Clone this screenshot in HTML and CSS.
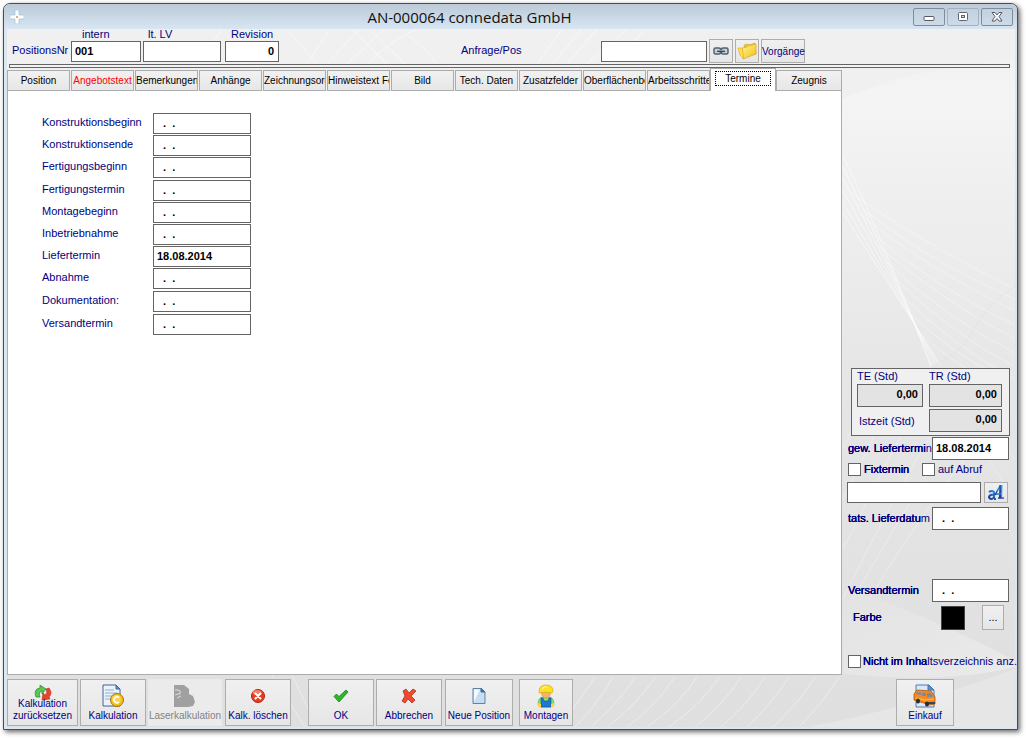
FILE: index.html
```html
<!DOCTYPE html>
<html lang="de">
<head>
<meta charset="utf-8">
<meta name="viewport" content="width=device-width, initial-scale=1">
<title>AN-000064 connedata GmbH</title>
<link rel="stylesheet" href="styles.css">
</head>
<body>
<div class="window">
  <header class="titlebar">
    <svg class="app-icon" width="14" height="14" viewBox="0 0 14 14" aria-hidden="true"><path d="M5 0h4v5h5v4H9v5H5V9H0V5h5z" fill="#fbfdff" stroke="#9fc3da" stroke-width=".7"/><circle cx="7" cy="7" r="1" fill="#e58a6a"/></svg>
    <h1 class="title">AN-000064 connedata GmbH</h1>
    <div class="window-controls">
      <button type="button" class="win-btn" aria-label="Minimieren"><svg width="12" height="12" viewBox="0 0 12 12"><rect x="1" y="5.500" width="10" height="4" rx="1" fill="#fff" stroke="#555a66"/></svg></button>
      <button type="button" class="win-btn win-btn-dim" aria-label="Maximieren"><svg width="12" height="12" viewBox="0 0 12 12"><rect x="1.500" y="1.500" width="9" height="8" rx="1" fill="#fff" stroke="#60656f"/><rect x="4.500" y="4.500" width="3" height="2" fill="#cdd9e5" stroke="#60656f"/></svg></button>
      <button type="button" class="win-btn" aria-label="Schließen"><svg width="12" height="12" viewBox="0 0 12 12"><path d="M1 1.500h3l2 2.500 2-2.500h3L8 5.500l3 4.500H8L6 7.500 4 10H1l3-4.500z" fill="#fff" stroke="#555a66"/></svg></button>
    </div>
  </header>

  <main class="client">
    <svg class="backdrop" viewBox="0 0 1008 698" preserveAspectRatio="none" aria-hidden="true">
      <defs>
        <linearGradient id="bg" x1="0" y1="0" x2="0" y2="1"><stop offset="0" stop-color="#f0f0f0"/><stop offset=".1" stop-color="#f4f4f4"/><stop offset=".3" stop-color="#ededed"/><stop offset=".5" stop-color="#e6e6e6"/><stop offset="1" stop-color="#dfdfdf"/></linearGradient>
        <linearGradient id="wave" x1="0" y1="0" x2="1" y2="1"><stop offset="0" stop-color="#e3e3e3"/><stop offset="1" stop-color="#efefef"/></linearGradient>
      </defs>
      <rect width="1008" height="698" fill="url(#bg)"/>
      <path d="M0 0H1008V30Q900 40 836 70H0z" fill="#f0f0f0"/>
      <path d="M836 560Q910 580 1008 632V638Q940 655 836 645z" fill="url(#wave)" opacity=".7"/>
      <path d="M800 698Q900 680 1008 640V698z" fill="#e6e6e6"/>
      <g fill="none" stroke="#fff" stroke-opacity=".5">
        <path d="M836 126Q880 220 924 338M836 138Q880 225 925 338M836 150Q880 232 927 337M836 162Q880 240 929 336M836 174Q880 248 931 335M836 184Q880 252 933 335"/>
        <path d="M840 160Q900 206 1008 260M846 172Q910 226 1008 270M854 186Q920 240 1008 282M862 202Q930 260 1008 296M870 216Q935 272 1008 310M878 232Q940 290 1008 324M886 248Q945 305 1008 338M894 266Q950 320 1008 350M902 284Q950 328 990 345M910 302Q940 328 960 340" stroke-opacity=".35"/>
        <path d="M924 338Q955 325 970 295Q985 270 1008 258" stroke="#ddd"/>
        <path d="M836 420L874 340M836 470Q870 400 902 340M836 520Q880 430 930 340M836 570Q890 460 940 380M846 570Q910 460 960 380M862 570Q910 490 980 400M920 340L1008 470M940 340L1008 430M900 350L1008 510" stroke-opacity=".3"/>
        <path d="M300 35L322 2M320 35L352 0M340 35L378 0M360 35Q385 10 410 0M345 0L380 35M362 0L398 35M400 6Q420 20 430 35M530 35L555 0M545 35L575 0M560 35L590 0M580 35L620 0M600 35L640 0M240 35L262 0M218 35L240 0M190 35L215 0M280 0L310 35" stroke-opacity=".5"/>
        <path d="M285 646L310 698M265 646L298 698M566 680L588 648M568 698Q590 676 606 648M584 698Q610 676 628 648M600 698Q630 676 648 648M620 698Q650 676 668 648M640 698Q672 676 690 648M662 698Q694 676 712 648M688 698Q716 676 734 648M714 698Q740 676 758 648M740 698Q764 676 782 648M766 698Q790 676 808 648M792 698Q814 676 832 648" stroke-opacity=".4"/>
      </g>
    </svg>

    <section class="header" aria-label="Position">
      <span class="label lead">PositionsNr</span>
      <div class="stack stack-intern"><label for="intern">intern</label><input id="intern" type="text" value="001"></div>
      <div class="stack stack-lv"><label for="lv">lt. LV</label><input id="lv" type="text"></div>
      <div class="stack stack-rev"><label for="rev">Revision</label><input id="rev" class="num" type="text" value="0"></div>
      <div class="request">
        <label class="label" for="anfrage">Anfrage/Pos</label>
        <input id="anfrage" type="text">
        <button type="button" class="tool" aria-label="Verknüpfen"><svg width="16" height="10" viewBox="0 0 16 10"><rect x="1" y="2" width="6.500" height="6" rx="1.500" fill="#c5d0d8" stroke="#50616f" stroke-width="1.500"/><rect x="8.500" y="2" width="6.500" height="6" rx="1.500" fill="#c5d0d8" stroke="#50616f" stroke-width="1.500"/><path d="M4 5h8" stroke="#33444f" stroke-width="2"/><path d="M4 4.500h8" stroke="#b9c8d2" stroke-width=".7"/></svg></button>
        <button type="button" class="tool" aria-label="Ordner"><svg width="20" height="18" viewBox="0 0 20 18"><defs><linearGradient id="fold" x1="0" y1="0" x2="1" y2="1"><stop stop-color="#fff38d"/><stop offset="1" stop-color="#f3be1c"/></linearGradient></defs><path d="M7 3l4-1 1 1 6-2 1 11-10 2z" fill="#f0c63c" stroke="#cfa023" stroke-width=".6"/><path d="M5 6l5-1 1-1 8-2v10L6 17z" fill="url(#fold)" stroke="#dba821" stroke-width=".7"/><path d="M1 6l4 0 2 11-4-4z" fill="#ffe04e" stroke="#dba821" stroke-width=".6"/></svg></button>
        <button type="button" class="tool tool-text">Vorgänge</button>
      </div>
    </section>
    <div class="rule"></div>

    <div class="body">
      <section class="left">
        <nav class="tabs" role="tablist">
          <button type="button" role="tab" class="tab"><span>Position</span></button>
          <button type="button" role="tab" class="tab tab-red"><span>Angebotstext</span></button>
          <button type="button" role="tab" class="tab"><span>Bemerkungen</span></button>
          <button type="button" role="tab" class="tab"><span>Anhänge</span></button>
          <button type="button" role="tab" class="tab"><span>Zeichnungsord</span></button>
          <button type="button" role="tab" class="tab"><span>Hinweistext Fe</span></button>
          <button type="button" role="tab" class="tab"><span>Bild</span></button>
          <button type="button" role="tab" class="tab"><span>Tech. Daten</span></button>
          <button type="button" role="tab" class="tab"><span>Zusatzfelder</span></button>
          <button type="button" role="tab" class="tab"><span>Oberflächenbe</span></button>
          <button type="button" role="tab" class="tab"><span>Arbeitsschritte</span></button>
          <button type="button" role="tab" class="tab tab-active" aria-selected="true"><span>Termine</span></button>
          <button type="button" role="tab" class="tab tab-last"><span>Zeugnis</span></button>
        </nav>
        <form class="panel">
          <div class="row"><label for="d1">Konstruktionsbeginn</label><input id="d1" type="text" value="  .  ."></div>
          <div class="row"><label for="d2">Konstruktionsende</label><input id="d2" type="text" value="  .  ."></div>
          <div class="row"><label for="d3">Fertigungsbeginn</label><input id="d3" type="text" value="  .  ."></div>
          <div class="row row-spaced"><label for="d4">Fertigungstermin</label><input id="d4" type="text" value="  .  ."></div>
          <div class="row"><label for="d5">Montagebeginn</label><input id="d5" type="text" value="  .  ."></div>
          <div class="row"><label for="d6">Inbetriebnahme</label><input id="d6" type="text" value="  .  ."></div>
          <div class="row"><label for="d7">Liefertermin</label><input id="d7" type="text" value="18.08.2014"></div>
          <div class="row"><label for="d8">Abnahme</label><input id="d8" type="text" value="  .  ."></div>
          <div class="row row-spaced"><label for="d9">Dokumentation:</label><input id="d9" type="text" value="  .  ."></div>
          <div class="row row-spaced"><label for="d10">Versandtermin</label><input id="d10" type="text" value="  .  ."></div>
        </form>
        <footer class="actions">
          <button type="button" class="action action-reset"><svg width="18" height="16" viewBox="0 0 18 16"><path d="M2 12Q-1 4 6 3V0l6 4-4 5V6Q4 7 6 12z" fill="#5cc653" stroke="#268a2b" stroke-width=".7"/><path d="M12 4l3-1q4 5 0 9l1 2-8 1 1-7 2 2q3-2 1-6z" fill="#e8442c" stroke="#b62c1b" stroke-width=".6"/></svg><span>Kalkulation<br>zurücksetzen</span></button>
          <button type="button" class="action action-calc"><svg width="22" height="24" viewBox="0 0 22 24"><path d="M1 1h13l4 4v17H1z" fill="#eaf3fc" stroke="#3f6595"/><path d="M14 1v4h4z" fill="#6798cb" stroke="#3f6595"/><path d="M3 6h9M3 9h12M3 12h7M3 15h5" stroke="#93afc9"/><circle cx="15" cy="16" r="6.500" fill="#f5bd19" stroke="#a87609"/><circle cx="14.500" cy="15.500" r="4.500" fill="#fbd54a"/><path d="M17 13.500a3 3 0 1 0 0 4.500" fill="none" stroke="#fff" stroke-width="1.500"/></svg><span>Kalkulation</span></button>
          <button type="button" class="action action-laser" disabled><svg width="22" height="24" viewBox="0 0 22 24"><path d="M0 1h10l5 4v5l4 2 2 6-2 4-5 1H0z" fill="#a0a0a0"/><path d="M1 6h3l2 1v3H4l-3 1M3 14l4-2" stroke="#dedede" fill="none"/></svg><span>Laserkalkulation</span></button>
          <button type="button" class="action action-clear"><svg width="16" height="16" viewBox="0 0 16 16"><circle cx="8" cy="8" r="6.500" fill="#e93b20" stroke="#af2616"/><ellipse cx="7" cy="4.500" rx="4.500" ry="2.500" fill="#f47c62"/><path d="M5.500 5.500l5 5m0-5l-5 5" stroke="#fff" stroke-width="2" stroke-linecap="round"/></svg><span>Kalk. löschen</span></button>
          <button type="button" class="action action-ok"><svg width="16" height="16" viewBox="0 0 16 16"><path d="M1 8.500L3.500 6 6 8.500 13 2l2 2L6 14z" fill="#2fb62b" stroke="#168019" stroke-width=".8"/></svg><span>OK</span></button>
          <button type="button" class="action action-cancel"><svg width="16" height="16" viewBox="0 0 16 16"><path d="M2 3l3-2 3 4 4-4 3 2-5 5 4 4-3 3-4-4-3 4-3-2 3-5z" fill="#f04a2c" stroke="#b3301b" stroke-width=".8"/></svg><span>Abbrechen</span></button>
          <button type="button" class="action action-new"><svg width="16" height="16" viewBox="0 0 16 16"><path d="M2 .5h8.500L14 4v11.500H2z" fill="#c5def5" stroke="#5d83a8"/><path d="M3 1.500h6l-6 12z" fill="#f7fbff"/><path d="M10 .5V4h4z" fill="#3d78ad" stroke="#3d6d9a"/></svg><span>Neue Position</span></button>
          <button type="button" class="action action-fit"><svg width="18" height="24" viewBox="0 0 18 24"><path d="M1 21q0-8 5-8h6q5 0 5 8l-3 2H4z" fill="#8be06b" stroke="#4ea83a" stroke-width=".6"/><path d="M4 14h2l1 3h4l1-3h2v9H4z" fill="#1f79cc" stroke="#125298" stroke-width=".6"/><ellipse cx="9" cy="9" rx="4.500" ry="5" fill="#f6b26a" stroke="#d58b42" stroke-width=".5"/><path d="M2 8Q2 1 9 1t7 6l-1 2q-7-2-13 0z" fill="#ffe21c" stroke="#d7a90c" stroke-width=".7"/><path d="M5 5q2-3 5-2" stroke="#fff8a5" fill="none"/><path d="M1 19l3 1v3H1zM17 19l-3 1v3h3z" fill="#ffd34b"/></svg><span>Montagen</span></button>
        </footer>
      </section>

      <aside class="side">
        <div class="times">
          <label for="te">TE (Std)</label><label for="tr">TR (Std)</label>
          <input id="te" class="num ro" type="text" value="0,00" readonly><input id="tr" class="num ro" type="text" value="0,00" readonly>
          <label class="actual" for="ist">Istzeit (Std)</label><input id="ist" class="num ro" type="text" value="0,00" readonly>
        </div>
        <div class="side-row"><label for="gew"><span class="heavy">gew. Liefertermi</span>n</label><input id="gew" class="date" type="text" value="18.08.2014"></div>
        <div class="checks">
          <label class="check check-fix"><input type="checkbox"><span class="heavy">Fixtermin</span></label>
          <label class="check"><input type="checkbox"><span>auf Abruf</span></label>
        </div>
        <div class="note">
          <input type="text" aria-label="Lieferhinweis">
          <button type="button" class="font-btn" aria-label="Schriftart"><svg width="18" height="17" viewBox="0 0 18 17"><defs><linearGradient id="ink" x1="0" y1="1" x2="1" y2="0"><stop stop-color="#122f8c"/><stop offset="1" stop-color="#2f9be8"/></linearGradient></defs><g fill="none" stroke="url(#ink)"><path d="M2 8q3-2 5 0v7M7 10.500q-5 0-5 3 2 3 5 0M7 15h2" stroke-width="2"/><path d="M8 11L13 2" stroke-width="1.500"/><path d="M14 1l-.5 13" stroke-width="3"/><path d="M9 10h5M11 14h6" stroke-width="1.500"/></g></svg></button>
        </div>
        <div class="side-row"><label for="tats"><span class="heavy">tats. Lieferdatu</span>m</label><input id="tats" class="date" type="text" value="  .  ."></div>
        <div class="side-row side-row-ship"><label for="vers"><span class="heavy">Versandtermin</span></label><input id="vers" class="date" type="text" value="  .  ."></div>
        <div class="colour"><span class="heavy">Farbe</span><span class="swatch"></span><button type="button" class="more" aria-label="Farbe wählen">...</button></div>
        <label class="check check-toc"><input type="checkbox"><span><span class="heavy">Nicht im Inha</span>ltsverzeichnis anz.</span></label>
        <button type="button" class="action action-buy"><svg width="24" height="24" viewBox="0 0 24 24"><path d="M3 1h13l5 5v17H3z" fill="#d8e9fb" stroke="#5379aa"/><path d="M15 1v5h6z" fill="#5594d6" stroke="#3e75b5"/><path d="M1 10l3-4 14 1 4 6v7l-5 1L1 16z" fill="#f78b1e" stroke="#a9550b" stroke-width=".8"/><path d="M3 10l1-2 4 .5V11zM9 8.500l4 .5v3H9zM14 9h4l2 4h-6z" fill="#7d88a8"/><path d="M3 14l9 2 9-1" stroke="#ffc15c" fill="none"/><path d="M12 18h10v2H12z" fill="#45414c"/><ellipse cx="5" cy="17" rx="2" ry="2.500" fill="#292b32"/><ellipse cx="14" cy="20" rx="2" ry="2.500" fill="#292b32"/></svg><span>Einkauf</span></button>
      </aside>
    </div>
  </main>
</div>
</body>
</html>
```

FILE: styles.css
```css
* { box-sizing: border-box; }

body {
  margin: 0;
  min-height: 100vh;
  padding: 3px 8px 8px 3px;
  display: flex;
  background: #fff;
  color: #000080;
  font: 11px/13px "Liberation Sans", Arial, sans-serif;
}

button, input { font: inherit; color: inherit; margin: 0; }

input[type="text"] {
  min-width: 0;
  height: 21px;
  padding: 0 3px 1px;
  border: 1px solid #646464;
  border-radius: 0;
  background: #fff;
  color: #000;
  font-weight: bold;
}

input[type="text"].num { text-align: right; padding-right: 4px; }

/* Window frame */
.window {
  flex: 1;
  min-width: 0;
  display: flex;
  flex-direction: column;
  padding: 0 2px 2px 3px;
  border: 1px solid #4a4d52;
  border-radius: 7px 7px 0 0;
  background: #dce6f1;
  box-shadow: 2px 2px 5px rgba(0, 0, 0, .6);
}

.titlebar {
  height: 25px;
  margin: 0 -2px 0 -3px;
  padding: 4px 4px 0 6px;
  display: grid;
  grid-template-columns: 1fr auto 1fr;
  align-items: start;
  border-radius: 6px 6px 0 0;
  background: linear-gradient(#bccad8, #d8e5f2);
}

.app-icon { margin-top: 2px; }

.title {
  margin: 0 84px 0 0;
  color: #111;
  font: 15px/18px "Open Sans", "Noto Sans", sans-serif;
}

.window-controls { display: flex; justify-content: flex-end; gap: 2px; }

.win-btn {
  width: 32px;
  height: 18px;
  padding: 0;
  display: grid;
  place-items: center;
  border: 1px solid #7f8c9d;
  border-radius: 2px;
  background: linear-gradient(#c3d1df, #cddbe9);
}

.win-btn-dim { border-color: #a3b1c0; }

/* Client area */
.client {
  position: relative;
  isolation: isolate;
  flex: 1;
  display: flex;
  flex-direction: column;
}

.backdrop {
  position: absolute;
  inset: 0;
  z-index: -1;
  width: 100%;
  height: 100%;
}

.header {
  display: flex;
  align-items: flex-end;
  padding: 0 0 1px 5px;
}

.label { padding-bottom: 2px; line-height: 22px; }
.lead { width: 59px; }
.stack { display: flex; flex-direction: column; padding-bottom: 1px; }
.stack label { line-height: 10px; padding-bottom: 2px; }
.stack-intern { width: 70px; margin-right: 2px; }
.stack-intern label { padding-left: 11px; }
.stack-lv { width: 78px; margin-right: 4px; }
.stack-lv label { padding-left: 5px; }
.stack-rev { width: 54px; }
.stack-rev label { padding-left: 6px; }

.request { display: flex; align-items: center; gap: 2px; margin-left: 182px; }
.request label { width: 138px; }
.request input { width: 106px; }

.tool, .font-btn, .more, .action {
  padding: 0;
  border: 1px solid #adadad;
  border-radius: 0;
  background: linear-gradient(#f0f0f0, #e6e6e6);
}

.tool {
  width: 24px;
  height: 24px;
  display: grid;
  place-items: center;
}

.tool-text { width: 44px; font-size: 10px; }

.rule {
  height: 4px;
  margin: 0 5px 0 2px;
  border: 1px solid #646464;
  background: #f3f3f3;
}

.body { flex: 1; display: flex; }

.left { flex: 1; min-width: 0; display: flex; flex-direction: column; }

/* Tabs */
.tabs { display: flex; align-items: flex-end; gap: 1px; height: 23px; }

.tab {
  flex: 1 1 63px;
  min-width: 0;
  height: 21px;
  padding: 0;
  border: 1px solid #acacac;
  border-radius: 0;
  background: linear-gradient(#f1f1f1, #e7e7e7);
  color: #000;
  font-size: 10px;
}

.tab span {
  display: block;
  overflow: hidden;
  white-space: nowrap;
  line-height: 15px;
}

.tab-red { color: #f00; }

.tab-active {
  flex-basis: 66px;
  height: 23px;
  margin: 0 -1px;
  padding: 0 4px 4px;
  border-bottom: 0;
  background: #fff;
}

.tab-active span { border: 1px dotted #000; line-height: 13px; }
.tab-last { flex-basis: 66px; }

.panel {
  flex: 1;
  display: flex;
  flex-direction: column;
  gap: 1px;
  padding: 22px 34px;
  border: solid #acacac;
  border-width: 0 1px 1px;
  background: #fff;
}

.row { display: flex; align-items: flex-start; }
.row label { width: 111px; line-height: 19px; }
.row input { width: 98px; }
.row-spaced { margin-top: 1px; }

/* Bottom actions */
.actions { display: flex; gap: 2px; padding: 4px 0 1px; }

.action {
  height: 47px;
  display: flex;
  flex-direction: column;
  align-items: center;
  justify-content: flex-end;
  gap: 2px;
  padding-bottom: 3px;
  font-size: 10px;
  line-height: 12px;
  white-space: nowrap;
}

.action-reset { width: 71px; gap: 0; }
.action-reset svg { margin-bottom: -3px; }
.action-calc { width: 66px; }
.action-laser { width: 74px; border-color: #e9e9e9; background: #ebebeb; color: #838383; }
.action-clear { width: 66px; margin-left: 1px; gap: 6px; }
.action-ok { width: 66px; margin-left: 15px; gap: 6px; }
.action-cancel { width: 66px; gap: 6px; }
.action-new { width: 68px; margin-left: 1px; gap: 6px; }
.action-fit { width: 54px; margin-left: 4px; }

/* Side column */
.side {
  width: 173px;
  display: flex;
  flex-direction: column;
  justify-content: flex-end;
  padding: 0 6px 1px 5px;
}

.times {
  display: grid;
  grid-template-columns: 66px 73px;
  gap: 2px 6px;
  margin: 0 -1px 0 4px;
  padding: 1px 5px 3px;
  border: 1px solid #646464;
  background: #f0f0f0;
}

.times > label { line-height: 12px; }
.times > .actual { padding: 2px 0 0 2px; line-height: 21px; }
.times > input[type="text"] { height: 23px; background: #e3e3e3; padding-bottom: 3px; }

/* Same glyphs painted again in place, for a denser stroke */
.heavy { text-shadow: 0 0 currentColor, 0 0 currentColor; }

.side-row {
  display: flex;
  justify-content: space-between;
  padding-left: 1px;
  margin-top: 1px;
  white-space: nowrap;
}

.side-row label { width: 84px; line-height: 22px; }
.side-row input.date { width: 77px; height: 23px; padding-bottom: 2px; }

.checks { display: flex; margin-top: 3px; }

.check {
  display: flex;
  gap: 3px;
  margin-left: 1px;
  line-height: 13px;
  white-space: nowrap;
}

.check input {
  flex: none;
  width: 13px;
  height: 13px;
  appearance: none;
  border: 1px solid #646464;
  background: #fff;
}

.check input:checked { background: #000080; }
.check-fix { width: 74px; margin-right: -1px; }

.note { display: flex; gap: 3px; margin: 6px 1px 3px 0; }
.note input { flex: 1; }
.font-btn { width: 24px; height: 21px; display: grid; place-items: center; }

.side-row-ship { margin-top: 49px; }

.colour { display: flex; align-items: center; margin-top: 3px; padding-left: 6px; line-height: 23px; }
.colour .heavy { width: 88px; }
.swatch { width: 24px; height: 24px; border: 1px solid #444; background: #000; }
.more { width: 22px; height: 25px; margin-left: 17px; color: #000; }

.check-toc { gap: 2px; margin-top: 25px; margin-bottom: 11px; }
.action-buy { width: 58px; margin-left: 49px; }
```
